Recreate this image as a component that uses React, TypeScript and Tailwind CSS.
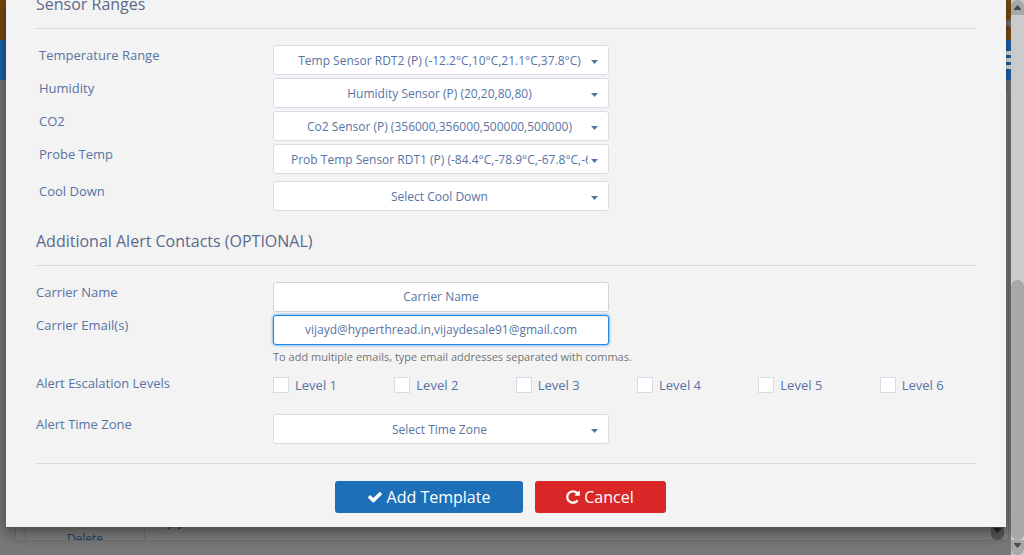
import React from 'react';

type SelectRowProps = { id: string; label: string; value: string; className?: string; labelClass?: string };

const boxClass =
  'block h-[30px] w-full rounded-[3px] border bg-white text-[12px] leading-[18px] text-[#5774a5] outline-none';

function SelectBox({ id, value }: { id: string; value: string }) {
  return (
    <div className="relative w-full max-w-[336px]">
      <select
        id={id}
        className={`${boxClass} appearance-none border-[#d7dce8] pl-[17px] pr-[20px] pt-[2px] text-center [text-align-last:center]`}
      >
        <option>{value}</option>
      </select>
      <svg className="pointer-events-none absolute right-[11px] top-[15px] h-1 w-[7px]" viewBox="0 0 7 4" aria-hidden="true">
        <path d="M0 0h7L3.5 4z" fill="#5774a5" />
      </svg>
    </div>
  );
}

function SelectRow({ id, label, value, className = '', labelClass = '' }: SelectRowProps) {
  return (
    <div className={`grid grid-cols-[237px_1fr] items-start ${className}`}>
      <label htmlFor={id} className={`text-[13px] leading-5 ${labelClass}`}>
        {label}
      </label>
      <SelectBox id={id} value={value} />
    </div>
  );
}

function Heading({ children }: { children: React.ReactNode }) {
  return <h2 className="border-b border-[#d9d9d9] pb-3 text-[16px] leading-6 text-[#5c6a8c]">{children}</h2>;
}

const ranges = [
  { id: 'temp', label: 'Temperature Range', value: 'Temp Sensor RDT2 (P) (-12.2°C,10°C,21.1°C,37.8°C)' },
  { id: 'humidity', label: 'Humidity', value: 'Humidity Sensor (P) (20,20,80,80)' },
  { id: 'co2', label: 'CO2', value: 'Co2 Sensor (P) (356000,356000,500000,500000)' },
  { id: 'probe', label: 'Probe Temp', value: 'Prob Temp Sensor RDT1 (P) (-84.4°C,-78.9°C,-67.8°C,-62.2°C)' },
];

function PageBehind() {
  return (
    <div className="flex h-full flex-col bg-[#787878]">
      <div className="flex h-10 shrink-0 items-center justify-end bg-[#7d4c12]">
        <svg className="mt-[6px] h-[10px] w-[5px]" viewBox="0 0 5 10" aria-hidden="true">
          <path d="M0 2l2 1 3-3v10L2 7 0 8z" fill="#7b7b7b" />
        </svg>
      </div>
      <div className="flex h-10 shrink-0 flex-col items-end justify-center gap-[3px] bg-[#1b67ae]">
        <span className="h-1 w-6 bg-[#e6e6e6]" />
        <span className="h-1 w-6 bg-[#e6e6e6]" />
        <span className="h-1 w-6 bg-[#e6e6e6]" />
      </div>
      <div className="mb-[14px] ml-[15px] mr-[2px] mt-2 flex min-h-0 flex-1 items-end rounded border border-[#6c7074] bg-[#808080] text-[12px] leading-4 text-[#173b66]">
        <div className="ml-[9px] flex h-4 w-[120px] justify-center overflow-hidden rounded-t border-x border-t border-[#6a727a]">
          <a href="#delete" className="mt-[6px]">Delete</a>
        </div>
        <span className="mb-[10px] ml-[14px] flex-1">vijay</span>
        <span className="mr-1 flex h-[14px] w-[13px] items-center justify-center rounded-b-md bg-[#585858] pb-[5px]">
          <svg className="h-[5px] w-[7px]" viewBox="0 0 7 5" aria-hidden="true">
            <path d="M0 0h7v1L3.5 5 0 1z" fill="#242424" />
          </svg>
        </span>
      </div>
    </div>
  );
}

function ScrollRail() {
  return (
    <div className="flex w-[13px] shrink-0 flex-col bg-[#cbcbcb]" aria-hidden="true">
      <span className="flex h-[15px] items-center justify-center rounded-t-md bg-[#a8a8a8]">
        <svg className="h-[5px] w-[7px]" viewBox="0 0 7 5">
          <path d="M0 5h7V4L3.5 0 0 4z" fill="#4a4a4a" />
        </svg>
      </span>
      <span className="grow-[265]" />
      <span className="grow-[260] rounded-full bg-[#a8a8a8]" />
      <span className="flex h-[15px] items-center justify-center rounded-b-md bg-[#a8a8a8] pb-1">
        <svg className="h-[5px] w-[7px]" viewBox="0 0 7 5">
          <path d="M0 0h7v1L3.5 5 0 1z" fill="#4a4a4a" />
        </svg>
      </span>
    </div>
  );
}

export default function App() {
  return (
    <div className="flex h-screen overflow-hidden font-['Open_Sans','Noto_Sans',sans-serif] text-[#5774a5]">
      <div className="relative min-w-0 flex-1 overflow-hidden">
        <PageBehind />
        <div
          role="dialog"
          aria-label="Add Template"
          className="absolute -top-2 left-[6px] right-[5px] bg-[#f3f3f3] px-[30px] pb-[14px] shadow-[0_5px_15px_rgba(0,0,0,0.5)]"
        >
          <form onSubmit={(e) => e.preventDefault()}>
            <Heading>Sensor Ranges</Heading>
            <div className="mt-4 flex flex-col gap-[3px]">
              {ranges.map((r) => (
                <SelectRow key={r.id} {...r} labelClass="pl-[3px]" />
              ))}
              <SelectRow id="cool" label="Cool Down" value="Select Cool Down" className="mt-1" labelClass="pl-[3px]" />
            </div>

            <div className="mt-[18px]">
              <Heading>Additional Alert Contacts (OPTIONAL)</Heading>
            </div>
            <div className="mt-4 grid grid-cols-[237px_1fr] items-start gap-y-[3px] text-[13px] leading-5">
              <label htmlFor="carrier">Carrier Name</label>
              <input
                id="carrier"
                type="text"
                placeholder="Carrier Name"
                className={`${boxClass} max-w-[336px] border-[#ced3dc] px-3 pb-[2px] text-center placeholder:text-[#5774a5]`}
              />
              <label htmlFor="emails">Carrier Email(s)</label>
              <div>
                <input
                  id="emails"
                  type="text"
                  defaultValue="vijayd@hyperthread.in,vijaydesale91@gmail.com"
                  className={`${boxClass} max-w-[336px] border-[#1e88e5] px-3 pb-[2px] text-center shadow-[0_0_3px_#1e88e5]`}
                />
                <p className="mt-1 text-[11px] leading-4 text-[#737373]">
                  To add multiple emails, type email addresses separated with commas.
                </p>
              </div>
            </div>

            <fieldset className="mt-2 grid grid-cols-[237px_1fr] items-start text-[13px] leading-5">
              <legend className="float-left contents">
                <span>Alert Escalation Levels</span>
              </legend>
              <div className="-mr-[25px] mt-[2px] grid grid-cols-6">
                {[1, 2, 3, 4, 5, 6].map((n) => (
                  <label key={n} className="flex items-center gap-[6px]">
                    <input type="checkbox" className="h-4 w-4 shrink-0 appearance-none border border-[#d7dce8] bg-white" />
                    Level {n}
                  </label>
                ))}
              </div>
            </fieldset>
            <SelectRow id="zone" label="Alert Time Zone" value="Select Time Zone" className="mt-[19px]" />

            <div className="mt-[19px] flex justify-center gap-3 border-t border-[#d9d9d9] pr-3 pt-[17px] text-[16px] leading-6 text-white">
              <button type="submit" className="flex h-8 w-[188px] items-center justify-center gap-1 rounded-[3px] bg-[#1d70b8]">
                <svg className="h-4 w-4" viewBox="0 0 1792 1792" fill="currentColor" aria-hidden="true">
                  <path d="M1671 566q0 40-28 68l-724 724-136 136q-28 28-68 28t-68-28l-136-136-362-362q-28-28-28-68t28-68l136-136q28-28 68-28t68 28l294 295 656-657q28-28 68-28t68 28l136 136q28 28 28 68z" />
                </svg>
                Add Template
              </button>
              <button type="button" className="flex h-8 w-[131px] items-center justify-center gap-1 rounded-[3px] bg-[#d92727]">
                <svg className="h-4 w-[14px]" viewBox="128 0 1536 1792" fill="currentColor" aria-hidden="true">
                  <path d="M1664 256v448q0 26-19 45t-45 19h-448q-42 0-59-40-17-39 14-69l138-138q-148-137-349-137-104 0-198.5 40.5t-163.5 109.5-109.5 163.5-40.5 198.5 40.5 198.5 109.5 163.5 163.5 109.5 198.5 40.5q119 0 225-52t179-147q7-10 23-12 15 0 25 9l137 138q9 8 9.5 20.5t-7.5 22.5q-109 132-264 204.5t-327 72.5q-156 0-298-61t-245-164-164-245-61-298 61-298 164-245 245-164 298-61q147 0 284.5 55.5t244.5 156.5l130-129q29-31 70-14 39 17 39 59z" />
                </svg>
                Cancel
              </button>
            </div>
          </form>
        </div>
      </div>
      <ScrollRail />
    </div>
  );
}
